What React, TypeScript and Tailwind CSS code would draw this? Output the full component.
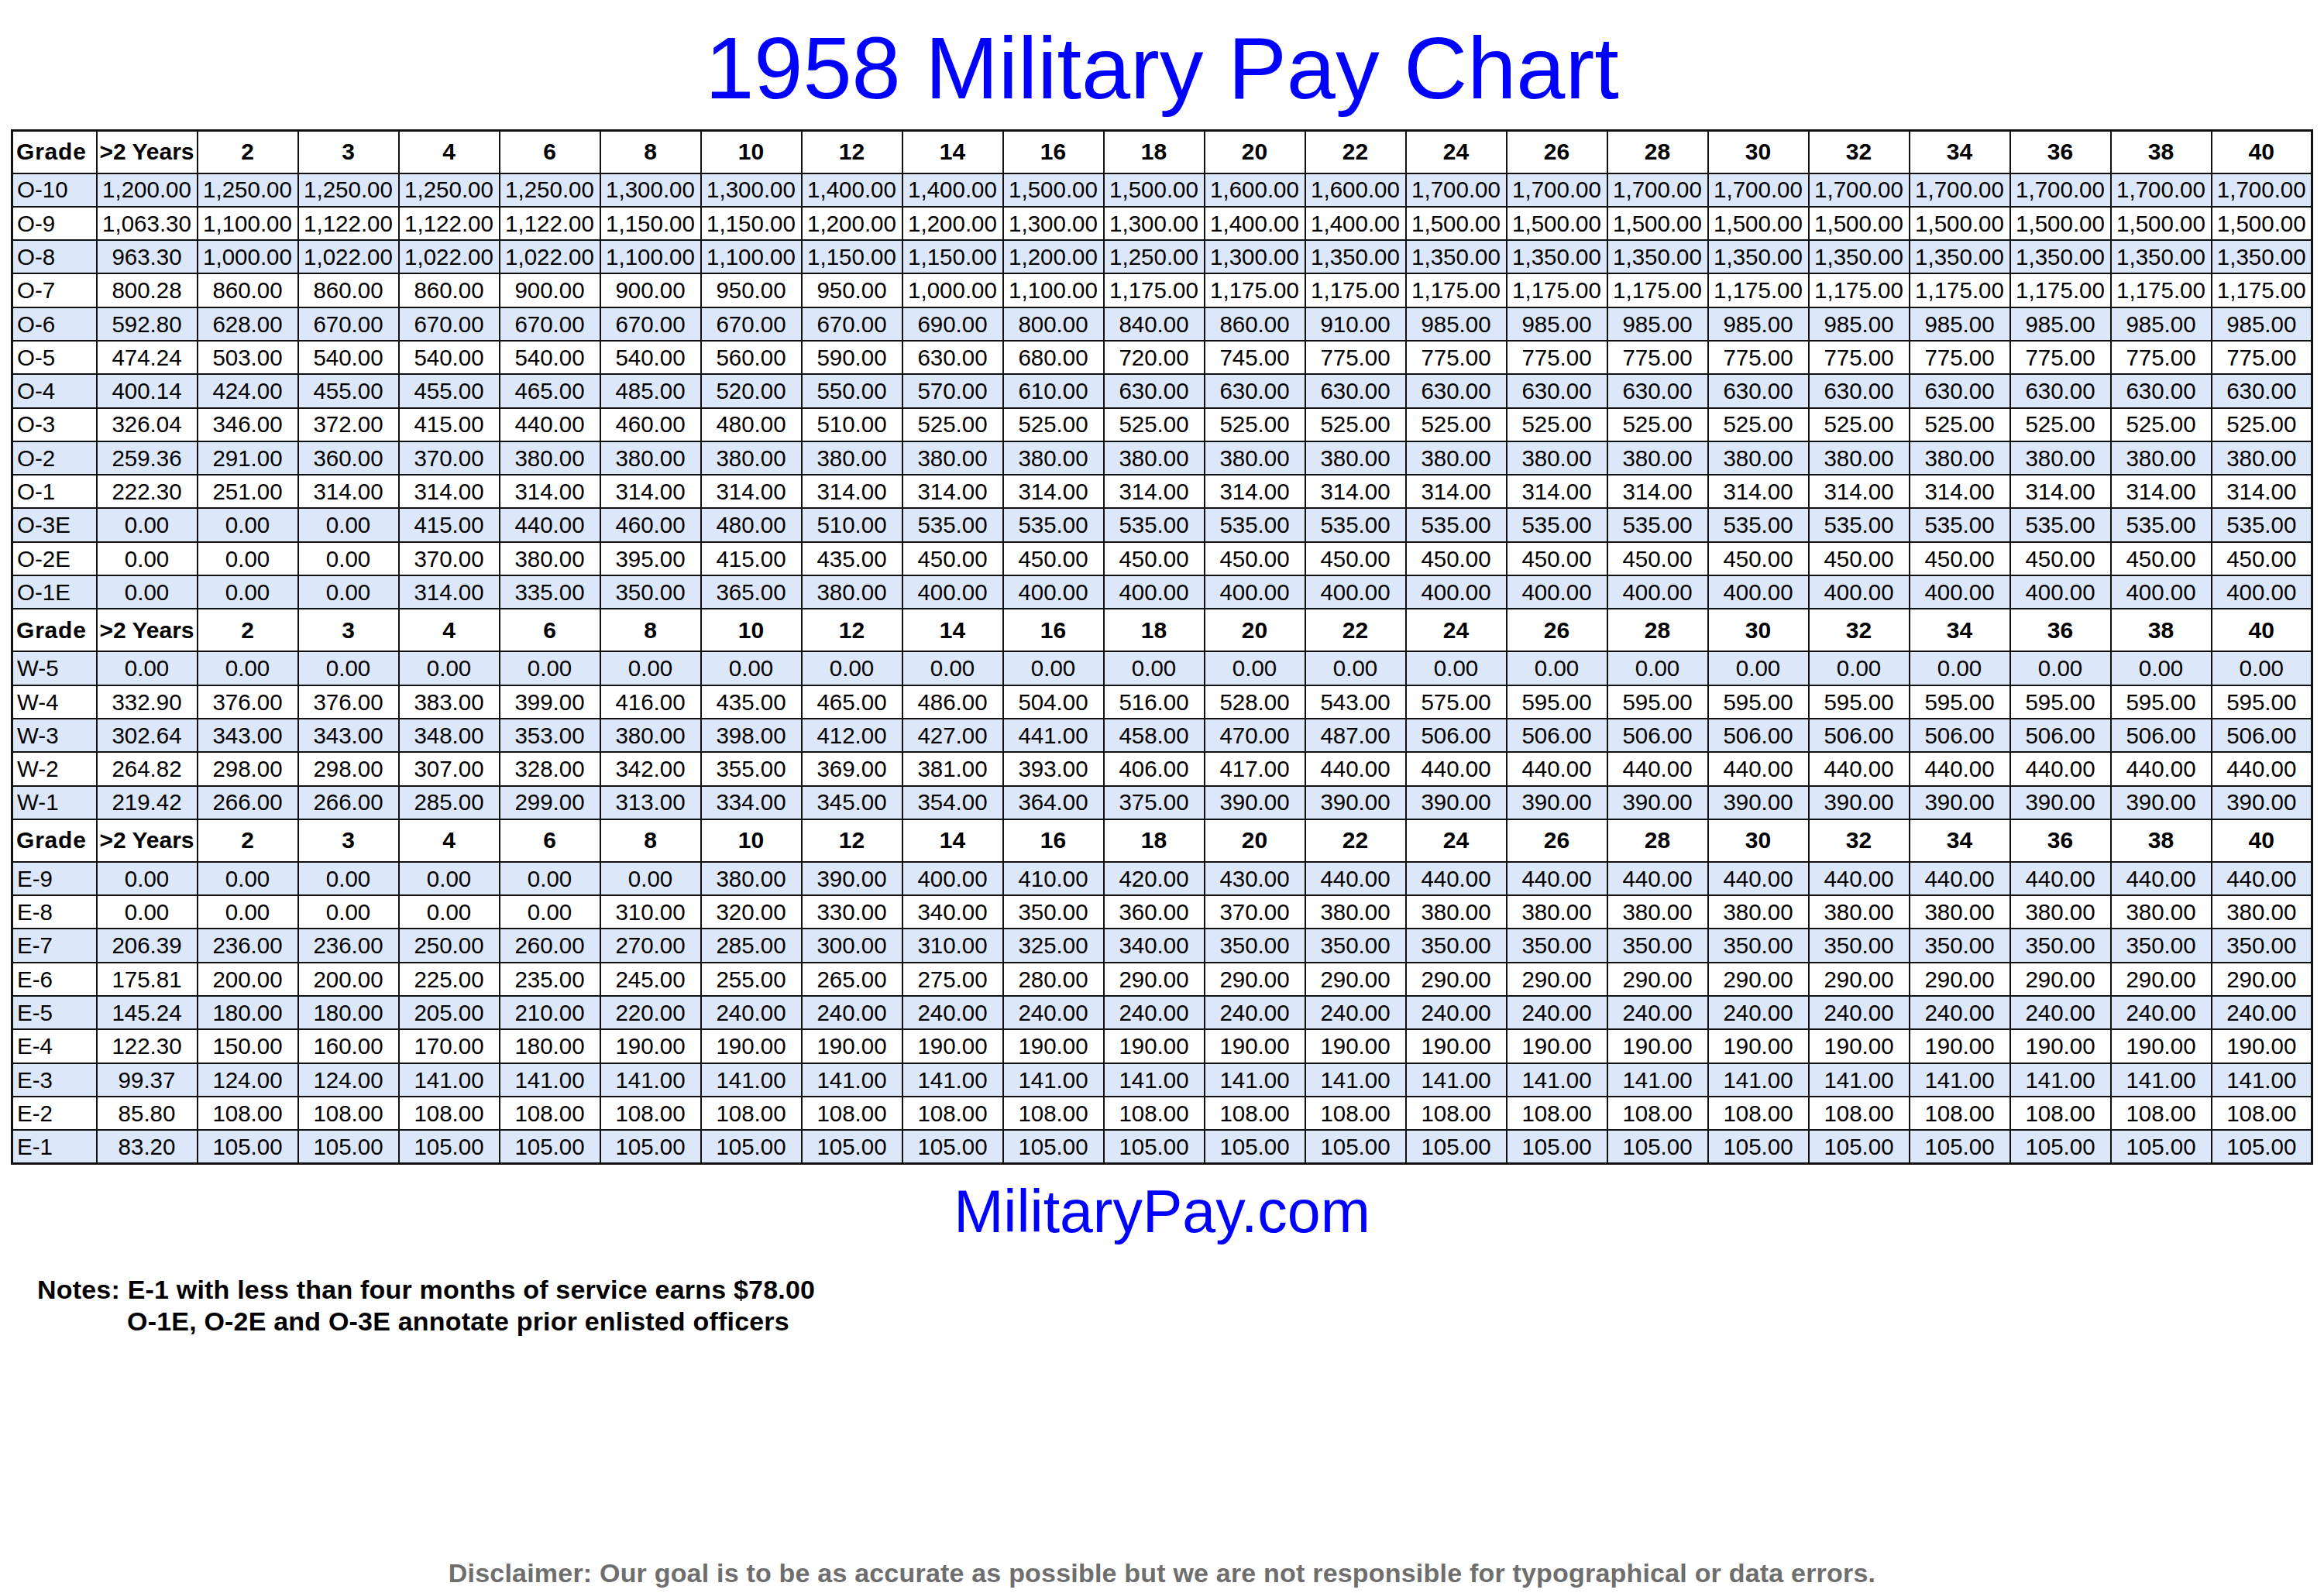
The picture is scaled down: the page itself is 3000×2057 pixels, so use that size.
const years = [">2 Years", "2", "3", "4", "6", "8", "10", "12", "14", "16", "18", "20", "22", "24", "26", "28", "30", "32", "34", "36", "38", "40"];

const rep = (n: number, v: number) => Array(n).fill(v) as number[];

const officers: [string, number[]][] = [
  ["O-10", [1200, 1250, 1250, 1250, 1250, 1300, 1300, 1400, 1400, 1500, 1500, 1600, 1600, ...rep(9, 1700)]],
  ["O-9", [1063.3, 1100, 1122, 1122, 1122, 1150, 1150, 1200, 1200, 1300, 1300, 1400, 1400, ...rep(9, 1500)]],
  ["O-8", [963.3, 1000, 1022, 1022, 1022, 1100, 1100, 1150, 1150, 1200, 1250, 1300, 1350, ...rep(9, 1350)]],
  ["O-7", [800.28, 860, 860, 860, 900, 900, 950, 950, 1000, 1100, 1175, 1175, 1175, ...rep(9, 1175)]],
  ["O-6", [592.8, 628, 670, 670, 670, 670, 670, 670, 690, 800, 840, 860, 910, ...rep(9, 985)]],
  ["O-5", [474.24, 503, 540, 540, 540, 540, 560, 590, 630, 680, 720, 745, 775, ...rep(9, 775)]],
  ["O-4", [400.14, 424, 455, 455, 465, 485, 520, 550, 570, 610, 630, 630, 630, ...rep(9, 630)]],
  ["O-3", [326.04, 346, 372, 415, 440, 460, 480, 510, 525, 525, 525, 525, 525, ...rep(9, 525)]],
  ["O-2", [259.36, 291, 360, 370, ...rep(18, 380)]],
  ["O-1", [222.3, 251, ...rep(20, 314)]],
  ["O-3E", [0, 0, 0, 415, 440, 460, 480, 510, ...rep(14, 535)]],
  ["O-2E", [0, 0, 0, 370, 380, 395, 415, 435, ...rep(14, 450)]],
  ["O-1E", [0, 0, 0, 314, 335, 350, 365, 380, ...rep(14, 400)]],
];

const warrants: [string, number[]][] = [
  ["W-5", rep(22, 0)],
  ["W-4", [332.9, 376, 376, 383, 399, 416, 435, 465, 486, 504, 516, 528, 543, 575, ...rep(8, 595)]],
  ["W-3", [302.64, 343, 343, 348, 353, 380, 398, 412, 427, 441, 458, 470, 487, ...rep(9, 506)]],
  ["W-2", [264.82, 298, 298, 307, 328, 342, 355, 369, 381, 393, 406, 417, 440, ...rep(9, 440)]],
  ["W-1", [219.42, 266, 266, 285, 299, 313, 334, 345, 354, 364, 375, 390, 390, ...rep(9, 390)]],
];

const enlisted: [string, number[]][] = [
  ["E-9", [...rep(6, 0), 380, 390, 400, 410, 420, 430, 440, ...rep(9, 440)]],
  ["E-8", [...rep(5, 0), 310, 320, 330, 340, 350, 360, 370, 380, ...rep(9, 380)]],
  ["E-7", [206.39, 236, 236, 250, 260, 270, 285, 300, 310, 325, 340, 350, 350, ...rep(9, 350)]],
  ["E-6", [175.81, 200, 200, 225, 235, 245, 255, 265, 275, 280, 290, 290, 290, ...rep(9, 290)]],
  ["E-5", [145.24, 180, 180, 205, 210, 220, ...rep(16, 240)]],
  ["E-4", [122.3, 150, 160, 170, 180, ...rep(17, 190)]],
  ["E-3", [99.37, 124, 124, ...rep(19, 141)]],
  ["E-2", [85.8, ...rep(21, 108)]],
  ["E-1", [83.2, ...rep(21, 105)]],
];

const fmt = (n: number) =>
  n.toLocaleString("en-US", { minimumFractionDigits: 2, maximumFractionDigits: 2 });

function HeaderRow() {
  return (
    <tr className="h-[55px] bg-white">
      <th className="border-2 border-[#111] pl-[4px] text-left text-[30px] font-bold tracking-[0.8px]">Grade</th>
      {years.map((y) => (
        <th key={y} className="border-2 border-[#111] p-0 text-center text-[30px] font-bold">
          {y}
        </th>
      ))}
    </tr>
  );
}

function Rows({ rows }: { rows: [string, number[]][] }) {
  return (
    <>
      {rows.map(([grade, vals], i) => (
        <tr key={grade} className={`h-[43.3px] ${i % 2 === 0 ? "bg-[#dde7fa]" : "bg-white"}`}>
          <td className="border-2 border-[#111] pl-[5px] text-left">{grade}</td>
          {vals.map((v, j) => (
            <td key={j} className="border-2 border-[#111] p-0 text-center">
              {fmt(v)}
            </td>
          ))}
        </tr>
      ))}
    </>
  );
}

export default function App() {
  return (
    <div className="min-h-[2057px] w-[3000px] bg-white pt-[31px] font-['Liberation_Sans',Arial,sans-serif] text-black">
      <h1 className="text-center text-[113.5px] leading-[114px] text-[#0000ff]">1958 Military Pay Chart</h1>

      <table className="mt-[22px] ml-[14px] w-[2972px] table-fixed border-collapse border-[3px] border-[#111] text-[29.5px] leading-none">
        <colgroup>
          <col className="w-[109px]" />
        </colgroup>
        <tbody>
          <HeaderRow />
          <Rows rows={officers} />
          <HeaderRow />
          <Rows rows={warrants} />
          <HeaderRow />
          <Rows rows={enlisted} />
        </tbody>
      </table>

      <p className="mt-[22px] text-center text-[77px] leading-[77px] text-[#0000ff]">MilitaryPay.com</p>

      <div className="mt-[42px] pl-[48px] text-[34px] leading-[41px] font-bold tracking-[0.2px]">
        <p>Notes: E-1 with less than four months of service earns $78.00</p>
        <p className="pl-[116px]">O-1E, O-2E and O-3E annotate prior enlisted officers</p>
      </div>

      <p className="mt-[284px] text-center text-[34px] leading-[40px] font-bold tracking-[0.2px] text-[#6e6e6e]">
        Disclaimer: Our goal is to be as accurate as possible but we are not responsible for typographical or data errors.
      </p>
    </div>
  );
}
